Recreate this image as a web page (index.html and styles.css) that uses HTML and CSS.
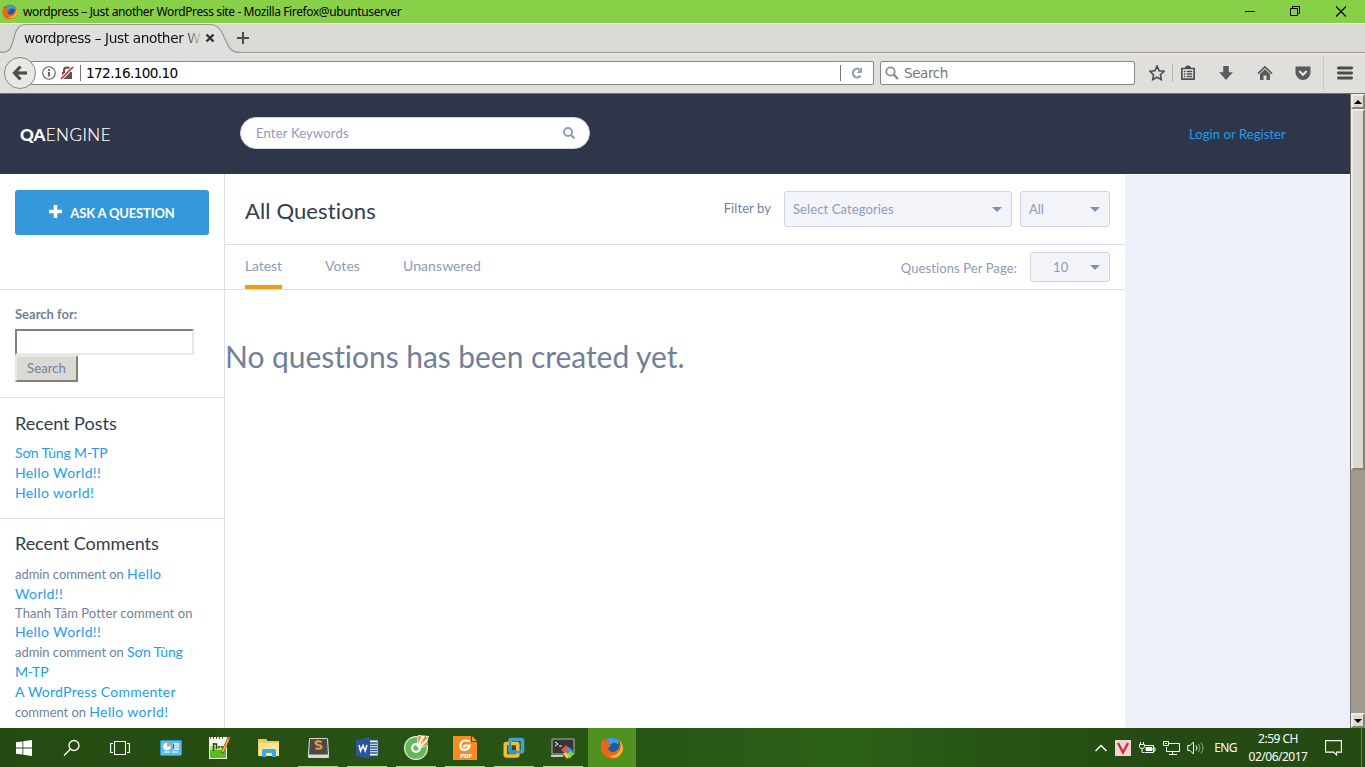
FILE: index.html
```html
<!DOCTYPE html>
<html lang="en">
<head>
<meta charset="utf-8">
<title>wordpress – Just another WordPress site</title>
<link rel="stylesheet" href="styles.css">
</head>
<body>
<div class="titlebar">
  <svg class="title-icon" width="16" height="16" viewBox="0 0 24 24"><use href="#firefox"/></svg>
  <span class="title-text">wordpress – Just another WordPress site - Mozilla Firefox@ubuntuserver</span>
  <div class="window-buttons">
    <svg width="46" height="22" viewBox="0 0 46 22" fill="none" stroke="#000"><path d="M19 10.500h10"/></svg>
    <svg width="46" height="22" viewBox="0 0 46 22" fill="none" stroke="#000"><path d="M18.500 7.500h7v7h-7zM20.500 7.500v-2h7v7h-2"/></svg>
    <svg width="46" height="22" viewBox="0 0 46 22" fill="none" stroke="#000" stroke-width="1.100"><path d="M18 5.500l10 10M28 5.500l-10 10"/></svg>
  </div>
</div>

<div class="tabstrip">
  <svg class="tab-shape" width="240" height="31" viewBox="0 0 240 31"><path d="M0 29.500H3C18 29.500 9 1.500 26 1.500H210C227 1.500 223 29.500 238 29.500H240V31H0Z" fill="#e0dfdb"/><path d="M0 29.200H3C18 29.200 9 1.500 26 1.500H210C227 1.500 223 29.200 238 29.200H240" fill="none" stroke="#98989a" stroke-width="1.200"/></svg>
  <span class="tab-title">wordpress – Just another W</span>
  <svg class="tab-close" width="10" height="10" viewBox="0 0 10 10"><path d="M1.500 1.500l7 7M8.500 1.500l-7 7" stroke="#333" stroke-width="2.400"/></svg>
  <svg class="tab-new" width="14" height="14" viewBox="0 0 14 14"><path d="M7 1v12M1 7h12" stroke="#4c4c4c" stroke-width="2"/></svg>
</div>

<div class="navbar">
  <div class="back"><svg width="16" height="16" viewBox="0 0 16 16" fill="none" stroke="#4d4d4d"><path d="M8.500 1.500L2.500 8l6 6.500" stroke-width="3.200"/><path d="M3 8h12" stroke-width="3.200"/></svg></div>
  <div class="urlbox">
    <svg width="14" height="14" viewBox="0 0 14 14"><circle cx="7" cy="7" r="6.300" fill="none" stroke="#5c5c5c" stroke-width="1.100"/><path d="M7 6v4.500" stroke="#4c4c4c" stroke-width="1.700"/><circle cx="7" cy="3.900" r="1" fill="#4c4c4c"/></svg>
    <svg width="14" height="14" viewBox="0 0 14 14"><path d="M2 6h10v7H2z" fill="#555"/><path d="M4 7V4.500a3 3 0 0 1 6 0V7" fill="none" stroke="#555" stroke-width="2"/><path d="M1 13L13 1" stroke="#fff" stroke-width="3.400"/><path d="M1 13L13 1" stroke="#d92d2b" stroke-width="1.700"/></svg>
    <i class="url-rule"></i>
    <span class="url-text">172.16.100.10</span>
    <i class="url-rule url-rule-end"></i>
    <svg class="reload" width="14" height="14" viewBox="0 0 14 14"><path d="M10.600 9.700A4.300 4.300 0 1 1 9.500 3.400" fill="none" stroke="#8fa0b4" stroke-width="2.200"/><path d="M12 1v6H6.500z" fill="#8fa0b4"/></svg>
  </div>
  <div class="searchbox">
    <svg width="14" height="14" viewBox="0 0 14 14" fill="none" stroke="#8b8b8b"><circle cx="5.500" cy="5.500" r="4.200" stroke-width="1.800"/><path d="M8.700 8.700l4.300 4.300" stroke-width="2.400"/></svg>
    <span>Search</span>
  </div>
  <div class="tools">
    <svg width="16" height="16" viewBox="0 0 16 16"><path d="M8 1.200l2.100 4.500 4.900.6-3.600 3.400.9 4.900L8 12.200l-4.300 2.400.9-4.900L1 6.300l4.900-.6z" fill="none" stroke="#4c4c4c" stroke-width="1.600"/></svg>
    <i class="tool-rule"></i>
    <svg width="16" height="16" viewBox="0 0 16 16"><path d="M1.900 3.500h12.200v10.600H1.900z" fill="#eeede9" stroke="#4c4c4c" stroke-width="1.700" stroke-linejoin="round"/><path d="M5 3.500a3 3 0 0 1 6 0V4H5z" fill="#4c4c4c"/><path d="M3.800 6.500h1.700M6.700 6.500h5.500M3.800 9h1.700M6.700 9h5.500M3.800 11.500h1.700M6.700 11.500h5.500" stroke="#4c4c4c" stroke-width="1.300"/></svg>
    <svg width="16" height="16" viewBox="0 0 16 16"><path d="M5.200 1h5.600v6.300h4L8 15 1.200 7.300h4z" fill="#5a5a5a"/></svg>
    <svg width="16" height="16" viewBox="0 0 16 16"><path d="M1 8.700L8 2l7 6.700" fill="none" stroke="#5a5a5a" stroke-width="1.700"/><path d="M3 9l5-4.700L13 9v6H9.500v-4.500h-3V15H3z" fill="#5a5a5a"/></svg>
    <svg width="16" height="16" viewBox="0 0 16 16"><path d="M1.500 1.500h13q1 0 1 1V7.500a7.500 7.500 0 0 1-15 0v-5q0-1 1-1z" fill="#5a5a5a"/><path d="M4.300 6L8 9.700 11.700 6" fill="none" stroke="#e5e4e0" stroke-width="2.200"/></svg>
    <i class="tool-rule tool-rule-tall"></i>
    <svg width="16" height="16" viewBox="0 0 16 16"><path d="M1.400 3h13.200M1.400 8h13.200M1.400 13h13.200" stroke="#4c4c4c" stroke-width="2.800" stroke-linecap="round"/></svg>
  </div>
</div>

<div class="viewport">
  <div class="site">
    <header class="site-header">
      <div class="logo"><b>QA</b><span>ENGINE</span></div>
      <div class="keywords"><span>Enter Keywords</span><svg width="12" height="12" viewBox="0 0 12 12" fill="none" stroke="#8d9bb9"><circle cx="5" cy="5" r="4" stroke-width="1.900"/><path d="M8 8l3.400 3.400" stroke-width="2.200"/></svg></div>
      <a class="login">Login or Register</a>
    </header>
    <div class="columns">
      <aside class="sidebar">
        <div class="ask-area"><div class="ask"><svg width="13" height="13" viewBox="0 0 13 13"><path d="M6.500 0v13M0 6.500h13" stroke="#fff" stroke-width="3.600"/></svg><span>ASK A QUESTION</span></div></div>
        <div class="widget widget-search">
          <label>Search for:</label>
          <div class="text-input"></div>
          <div class="submit">Search</div>
        </div>
        <div class="widget widget-posts">
          <h3>Recent Posts</h3>
          <a class="accented">Sơn Tùng M-TP</a><a>Hello World!!</a><a>Hello world!</a>
        </div>
        <div class="widget widget-comments">
          <h3>Recent Comments</h3>
          <p>admin comment on <a>Hello<br>World!!</a></p>
          <p class="potter">Thanh Tâm Potter comment on<br><a>Hello World!!</a></p>
          <p>admin comment on <a class="accented">Sơn Tùng<br>M-TP</a></p>
          <p><a class="author">A WordPress Commenter</a><br>comment on <a>Hello world!</a></p>
        </div>
      </aside>
      <main class="main">
        <div class="heading">
          <h1>All Questions</h1>
          <span class="filter-label">Filter by</span>
          <div class="select select-cat"><span>Select Categories</span><i></i></div>
          <div class="select select-all"><span>All</span><i></i></div>
        </div>
        <div class="tabs">
          <a class="active">Latest</a><a>Votes</a><a>Unanswered</a>
          <span class="per-page">Questions Per Page:</span>
          <div class="select select-num"><span>10</span><i></i></div>
        </div>
        <h2 class="empty">No questions has been created yet.</h2>
      </main>
      <div class="rightbar"></div>
    </div>
  </div>
  <div class="scrollbar">
    <div class="sb-button"><i class="up"></i></div>
    <div class="sb-thumb"></div>
    <div class="sb-track"></div>
    <div class="sb-button"><i class="down"></i></div>
  </div>
</div>

<div class="taskbar">
  <div class="task start"><svg width="16" height="16" viewBox="0 0 16 16" fill="#fff"><path d="M0 2.300l6.500-.9v6.100H0zM7.300 1.300L16 0v7.500H7.300zM0 8.400h6.500v6.200L0 13.700zM7.300 8.400H16V16l-8.700-1.200z"/></svg></div>
  <div class="task find"><svg width="18" height="18" viewBox="0 0 18 18" fill="none" stroke="#fff" stroke-width="1.300"><circle cx="11" cy="6.500" r="5"/><path d="M7.300 10.200L1 16.500"/></svg></div>
  <div class="task views"><svg width="20" height="16" viewBox="0 0 20 16" fill="none" stroke="#fff" stroke-width="1.100"><path d="M4.500 1.500h11v13h-11zM3 3.500H.6v9H3M17 3.500h2.400v9H17"/></svg></div>
  <div class="task"><svg width="22" height="18" viewBox="0 0 22 18"><rect x=".5" y="1.500" width="21" height="15" rx="1" fill="#5dbdec" stroke="#2e93d1"/><circle cx="7" cy="7.500" r="3.800" fill="#fff"/><path d="M7 7.500V3.700a3.800 3.800 0 0 1 3.800 3.800z" fill="#f49a27"/><path d="M13 5h6M13 7.500h6M13 10h6" stroke="#eefaff" stroke-width="1.400"/><path d="M13.500 5v5" stroke="#1670ae"/><path d="M4 13h6M12 13h6" stroke="#caefff" stroke-width="1.500"/></svg></div>
  <div class="task"><svg width="24" height="25" viewBox="0 0 24 25"><path d="M1 2h18v22H1z" fill="#f4f8ec"/><path d="M2 11h16v12H2z" fill="#b9e56f"/><path d="M2 15h16v8H2z" fill="#54bd20"/><path d="M2.500 2v2M5.500 2v2M8.500 2v2M11.500 2v2M14.500 2v2" stroke="#656" stroke-width="1"/><path d="M5.500 8v8M5.500 9h3v5M10 12h2M13 12h2" stroke="#263d22" stroke-width="1.400" fill="none"/><path d="M21 3l-7 15" stroke="#91502c" stroke-width="3"/><path d="M20.500 4l-6 13" stroke="#f4ba35" stroke-width="1.700"/><path d="M19 4l1.500-2.500 2 1.200L21 5z" fill="#d66873"/></svg></div>
  <div class="task"><svg width="22" height="20" viewBox="0 0 22 20"><path d="M0 2q0-1 1-1h7l2 2h11v15H0z" fill="#f3c85b"/><path d="M1 5h20v13H1z" fill="#ffe397"/><path d="M4 19v-6q0-2 2-2h10q2 0 2 2v6h-4v-4H8v4z" fill="#37abe1"/></svg></div>
  <div class="task running"><svg width="23" height="22" viewBox="0 0 23 22"><path d="M2 2q0-1 2-1h15q2 0 2 1l1 14v4q0 1-1 1H2q-1 0-1-1v-4z" fill="#d9d9d5"/><path d="M3 2h17l1 15.500H2z" fill="#4b4a49"/><path d="M14.500 5q-5.500-1.800-6 .6 0 1.800 3 2.400 3.500.5 3 2.400-1 2.200-6 .8" fill="none" stroke="#f39b3e" stroke-width="2"/></svg></div>
  <div class="task running"><svg width="23" height="22" viewBox="0 0 23 22"><path d="M12 3h10v16H12z" fill="#fff" stroke="#2a5699"/><path d="M14 6h7M14 8.500h7M14 11h7M14 13.500h7M14 16h7" stroke="#2a5699" stroke-width="1.300"/><path d="M0 3l14-3v22L0 19z" fill="#2a5699"/><path d="M3 8l1.500 6L7 8.500 9.200 14 11 8" fill="none" stroke="#fff" stroke-width="1.500"/></svg></div>
  <div class="task running"><svg width="25" height="25" viewBox="0 0 25 25"><circle cx="12" cy="13" r="8" fill="none" stroke="#e4f5df" stroke-width="8"/><circle cx="12" cy="13" r="7.700" fill="none" stroke="#63b959" stroke-width="6.200"/><circle cx="12" cy="13" r="3.800" fill="#6abb62" stroke="#fff" stroke-width="2.200"/><path d="M12.500 11L14 0l11 1-3 10-7 3z" fill="#eef7e9"/><path d="M14 9l.5-8 3 .5zM16 10l5-9 3 1.500zM17 12l7-6v3.500z" fill="#e98a35"/></svg></div>
  <div class="task running"><svg width="24" height="24" viewBox="0 0 24 24"><path d="M0 0h18v6h6v18H0z" fill="#f78d21"/><path d="M19 0l5 5h-5z" fill="#ef9b2d"/><path d="M17 5.500q-8-3-9.500 3-1 6 4.500 5.300 4-.8 4.700-4.300h-4.500l-2 2" fill="none" stroke="#fff" stroke-width="2.200"/><text x="7" y="22" class="pdf">PDF</text></svg></div>
  <div class="task running"><svg width="22" height="22" viewBox="0 0 22 22"><rect x="7" y="2.500" width="12.500" height="12.500" rx="1" fill="none" stroke="#3ba6cf" stroke-width="3.600"/><rect x="2.300" y="6.500" width="12.500" height="12.500" rx="1" fill="none" stroke="#f2bd38" stroke-width="3.600"/><path d="M7 5v10h11" fill="none" stroke="#3597c4" stroke-width="2.400"/></svg></div>
  <div class="task running"><svg width="24" height="22" viewBox="0 0 24 22"><path d="M1 2h22v15H1z" fill="#353638" stroke="#b1b3b3"/><path d="M4 5l3 2-3 2M8 9h3" stroke="#fff" fill="none"/><path d="M0 19h12" stroke="#c9c9c9" stroke-width="2"/><path d="M15 8l4 4-5 5-4-4z" fill="#e8533e"/><path d="M18 10l4 4-4 4-4-4z" fill="#4a8ee0"/><path d="M16 17l4-3 3 3-5 5z" fill="#7bd945"/><path d="M12 17l3-2 3 4-2 3z" fill="#f4cc3f"/></svg></div>
  <div class="task current"><svg width="24" height="24" viewBox="0 0 24 24"><g id="firefox"><circle cx="12" cy="12" r="11" fill="#e05f18"/><circle cx="12.500" cy="9.500" r="8.300" fill="#1f59a3"/><path d="M6 3.500q6-4 12 0l1 5-5-2-3 2-4-1z" fill="#3f9fd8"/><path d="M1 8q1-4 3-6 0 3 1 4 2-1 4 0l-1 2 3 1q0 2-3 3 1 4 5 4 6-1 7-8 1 7-4 10-6 4-11 1Q0 16 1 8z" fill="#e8681b"/><path d="M18.500 3.500q4.500 7.500-.5 13-4 4-10 3 8 5 13-1.500 5-7-2.500-14.500z" fill="#f9b72b"/></g></svg></div>
  <div class="tray">
    <svg width="14" height="10" viewBox="0 0 14 10"><path d="M1.500 8L7 2.500 12.500 8" fill="none" stroke="#fff" stroke-width="1.400"/></svg>
    <svg width="16" height="16" viewBox="0 0 16 16"><path d="M0 0h16v16H0z" fill="#f3d3d3"/><path d="M3 3l5 9.500L13 3" fill="none" stroke="#c03338" stroke-width="2.400"/></svg>
    <svg width="18" height="14" viewBox="0 0 18 14" fill="none" stroke="#fff"><path d="M6.500 4.500h9v7h-9M16 7h1v3h-1M1.500 3.500h5v2q0 2-2.500 2t-2.500-2zM2.500 1v2M5.500 1v2M4 8v3.500h2"/><path d="M8 6.500h6v3H8z" fill="#fff"/></svg>
    <svg width="17" height="16" viewBox="0 0 17 16" fill="none" stroke="#fff"><path d="M6 3.500h10.500v8H3.500V7M9.500 12v2M6 14.500h8M.5 1.500h5v4h-5zM2 3.500h2"/></svg>
    <svg width="18" height="14" viewBox="0 0 18 14" fill="none" stroke="#fff"><path d="M.8 4.500H3L6.500 1v12L3 9.500H.8z"/><path d="M9 4.500q2 2.500 0 5"/><path d="M11.500 3q3 4 0 8M14 1.500q4 5.500 0 11" stroke="#91a587"/></svg>
    <span class="lang">ENG</span>
    <div class="clock"><span>2:59 CH</span><span>02/06/2017</span></div>
    <svg width="17" height="16" viewBox="0 0 17 16"><path d="M.6.600h15.800v11.500h-4.800v3l-3-3h-8z" fill="none" stroke="#fff" stroke-width="1.100"/></svg>
    <i class="peek"></i>
  </div>
</div>
</body>
</html>
```
FILE: styles.css
```css
* { box-sizing: border-box; }
body { margin: 0; width: 1365px; height: 767px; overflow: hidden; display: flex; flex-direction: column; font-family: Lato, sans-serif; font-variant-ligatures: none; background: #fff; }
svg { display: block; flex: none; }
h1, h2, h3, p { margin: 0; font-weight: 400; }

/* window frame */
.titlebar { height: 23px; flex: none; background: #88d048; display: flex; align-items: center; padding-left: 2px; }
.title-icon { margin-right: 5px; }
.title-text { font: 12px/22px "Noto Sans", sans-serif; color: #000; white-space: nowrap; letter-spacing: -0.39px; padding-top: 1px; }
.window-buttons { margin-left: auto; margin-right: 1px; display: flex; }
.tabstrip { height: 30px; flex: none; background: #dad9d4; border-top: 1px solid #eeede9; border-bottom: 1px solid #98968f; display: flex; align-items: center; position: relative; font-family: "DejaVu Sans", sans-serif; }
.tab-shape { position: absolute; left: 0; top: -1px; }
.tab-title { position: relative; margin-left: 24px; width: 177px; white-space: nowrap; font-size: 13.700px; letter-spacing: -0.4px; color: #111; -webkit-mask-image: linear-gradient(90deg, #000 89%, transparent 101%); mask-image: linear-gradient(90deg, #000 89%, transparent 101%); }
.tab-close { position: relative; margin-left: 4px; }
.tab-new { margin-left: 21px; }
.navbar { height: 41px; flex: none; background: #e0dfdb; border-top: 1px solid #eeede9; border-bottom: 1px solid #77746f; display: flex; align-items: center; padding: 0 0 1px 4px; font-family: "DejaVu Sans", sans-serif; }
.back { width: 32px; height: 32px; border: 1px solid #8b877f; border-radius: 50%; background: #e9e8e5; display: flex; align-items: center; justify-content: center; z-index: 1; flex: none; }
.urlbox { width: 844px; height: 24px; margin-left: -6px; background: #fff; border: 1px solid #8b857b; border-radius: 2px; display: flex; align-items: center; padding-left: 11px; gap: 4px; flex: none; }
.url-rule { width: 1px; height: 16px; background: #77736d; margin-left: 2px; }
.url-rule-end { margin-left: auto; }
.reload { margin: 0 9px 0 5px; }
.url-text { font-size: 13.600px; letter-spacing: -0.6px; color: #000; margin-left: 1px; }
.searchbox { width: 255px; height: 24px; margin-left: 6px; background: #fff; border: 1px solid #8b857b; border-radius: 2px; display: flex; align-items: center; gap: 5px; padding-left: 4px; font-size: 13.500px; letter-spacing: -0.4px; color: #777; flex: none; }
.tools { flex: 1; display: flex; align-items: center; justify-content: space-between; padding: 0 12px 0 14px; }
.tool-rule { width: 1px; height: 18px; background: #b5b3ae; margin: 0 -15px 0 -15px; }
.tool-rule-tall { height: 34px; background: #cbc9c5; margin: 0 -9px 0 -10px; }

/* page */
.viewport { height: 634px; flex: none; display: flex; overflow: hidden; }
.site { width: 1350px; display: flex; flex-direction: column; }
.site-header { height: 80px; flex: none; background: #30364a; display: flex; align-items: center; padding-left: 20px; }
.logo { width: 220px; color: #fff; font-size: 17px; line-height: 20px; padding-top: 2px; }
.logo b { font-weight: 900; letter-spacing: 0.2px; }
.logo span { font-weight: 300; letter-spacing: 0.500px; -webkit-text-stroke: 0.2px #fff; }
.keywords { width: 350px; height: 32px; margin-bottom: 2px; border-radius: 16px; background: #fff; border: 1px solid #d0d4e3; padding: 0 14px 0 15px; display: flex; align-items: center; justify-content: space-between; color: #8d9bb9; font-size: 13px; letter-spacing: 0.19px; }
.login { margin-left: 599px; color: #1b9df2; font-size: 13px; letter-spacing: 0.08px; }
.columns { flex: 1; display: flex; }
.sidebar { width: 225px; border-right: 1px solid #dadfea; color: #717f9b; font-size: 13px; }
.ask-area { height: 116px; padding: 16px 15px; border-bottom: 1px solid #dadfea; }
.ask { height: 45px; background: #3598db; border-radius: 3px; color: #fff; font-weight: 700; font-size: 13px; letter-spacing: -0.15px; display: flex; align-items: center; justify-content: center; gap: 8px; }
.ask svg { margin-top: -2px; }
.widget { padding-left: 15px; border-bottom: 1px solid #dadfea; }
.widget-search { height: 108px; padding-top: 16px; }
.widget-search label { display: block; font-weight: 700; line-height: 17px; margin-bottom: 6px; }
.text-input { width: 179px; height: 26px; border: 2px solid; border-color: #858177 #e9e8e4 #e9e8e4 #858177; background: #fff; }
.submit { width: 63px; height: 27px; background: #dad9d4; border: 2px solid; border-color: #e9e8e4 #858177 #858177 #e9e8e4; text-align: center; line-height: 23px; letter-spacing: 0.1px; }
.widget h3 { color: #2e3e50; font-size: 18px; line-height: 22px; }
.widget a { color: #1b9df2; font-size: 14px; letter-spacing: 0.38px; }
.widget .accented { letter-spacing: -0.15px; }
.widget .author { letter-spacing: 0.25px; }
.widget-posts { height: 121px; padding-top: 14px; }
.widget-posts h3 { margin-bottom: 9px; }
.widget-posts a { display: block; line-height: 20px; }
.widget-comments { padding-top: 13px; border: 0; white-space: nowrap; }
.widget-comments h3 { margin-bottom: 10px; letter-spacing: -0.05px; }
.widget-comments p { line-height: 20px; height: 40px; letter-spacing: -0.05px; }
.widget-comments .potter { line-height: 19px; height: 38px; letter-spacing: 0.06px; }
.widget-comments .potter a { line-height: 17px; }
.main { width: 900px; }
.heading { height: 71px; border-bottom: 1px solid #dadde9; display: flex; align-items: center; padding: 0 15px 0 20px; }
.heading h1 { font-size: 22px; color: #2e3e50; margin-top: 2px; flex: 1; letter-spacing: 0.13px; }
.filter-label { color: #717f9b; font-size: 13px; margin-right: 13px; margin-top: -2px; letter-spacing: 0.08px; }
.select { background: #f3f4f9; border: 1px solid #d0d4e3; border-radius: 3px; color: #8d9bb9; font-size: 13px; display: flex; align-items: center; justify-content: space-between; padding: 0 9px 0 8px; height: 36px; }
.select i { border: 5px solid transparent; border-top: 5px solid #8390ae; border-bottom: 0; }
.select-cat { width: 228px; margin-right: 8px; letter-spacing: 0.1px; }
.select-all { width: 90px; }
.select-num { width: 80px; height: 30px; padding-left: 22px; letter-spacing: 0.3px; }
.tabs { height: 45px; border-bottom: 1px solid #dadde9; display: flex; align-items: center; padding: 0 15px 0 20px; gap: 43px; color: #8d9bb9; }
.tabs a { height: 44px; line-height: 42px; font-size: 14px; letter-spacing: 0.08px; }
.tabs .active { border-bottom: 4px solid #f39b12; letter-spacing: -0.1px; }
.per-page { font-size: 13px; margin-left: auto; margin-right: -30px; padding-top: 2px; letter-spacing: 0.1px; }
.empty { font-size: 30px; color: #717f9b; line-height: 36px; margin-top: 48px; white-space: nowrap; letter-spacing: -0.05px; }
.rightbar { flex: 1; background: #edf0f9; border-top: 1px solid #fff; }

/* scrollbar */
.scrollbar { width: 15px; background: #9f9990; border-left: 1px solid #77736a; display: flex; flex-direction: column; }
.sb-button { height: 15px; flex: none; background: #dad9d4; border: 2px solid; border-color: #eeede9 #858177 #858177 #eeede9; display: flex; align-items: center; justify-content: center; }
.sb-button i { border: 4px solid transparent; }
.sb-button .up { border-top: 0; border-bottom-color: #000; }
.sb-button .down { border-bottom: 0; border-top-color: #000; }
.sb-thumb { height: 361px; background: #dad9d4; border: 2px solid; border-color: #eeede9 #858177 #858177 #eeede9; }
.sb-track { flex: 1; }

/* taskbar */
.taskbar { height: 39px; flex: none; background: linear-gradient(90deg, #244b11 0%, #285114 28%, #285515 46%, #2b6117 62%, #285515 72%, #244b11 84%); display: flex; }
.task { width: 49px; flex: none; display: flex; align-items: center; justify-content: center; }
.start, .find, .views { width: 48px; }
.views { margin-right: 2px; }
.running { box-shadow: inset 0 -1px #a6dc85; margin: 0 4px 0 5px; width: 40px; }
.current { background: #50921f; width: 48px; margin-left: 1px; }
.pdf { font: bold 5.500px "DejaVu Sans", sans-serif; fill: #fff; }
.tray { flex: 1; display: flex; align-items: center; justify-content: flex-end; color: #fff; font: 12px "Noto Sans", sans-serif; gap: 7px; }
.lang { margin-left: 2px; letter-spacing: -0.6px; }
.clock { width: 64px; margin: 0 8px 0 2px; display: flex; flex-direction: column; align-items: center; line-height: 18px; letter-spacing: -0.5px; white-space: nowrap; }
.peek { width: 1px; height: 39px; background: #668557; margin: 0 3px 0 12px; }
```
